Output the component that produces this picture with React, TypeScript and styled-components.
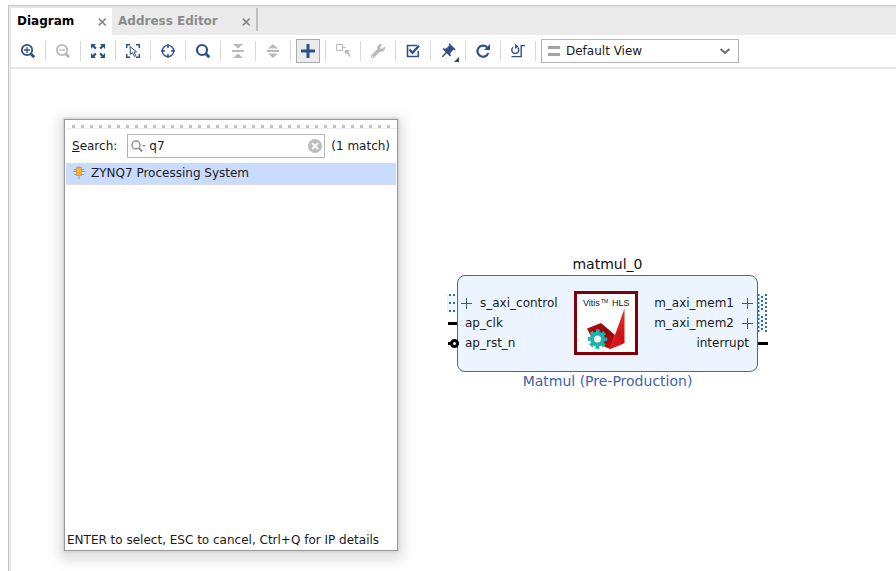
import React from "react";
import styled, { createGlobalStyle } from "styled-components";
import { FaWrench } from "react-icons/fa";
import { MdPushPin } from "react-icons/md";

const NAVY = "#2f4f88";
const MUTED = "#b9b9b9";

const GlobalStyle = createGlobalStyle`
  * { box-sizing: border-box; }
  body {
    margin: 0;
    background: #fff;
    color: #1a1a1a;
    font: 12px/16px "DejaVu Sans", sans-serif;
  }
  button, input, select { font: inherit; color: inherit; }
`;

const Panel = styled.main`
  display: flex;
  flex-direction: column;
  height: calc(100vh - 5px);
  margin: 5px 0 0 8px;
  border-top: 1px solid #c8c8c8;
  border-left: 1px solid #c8c8c8;
  overflow: hidden;
`;

const Inner = styled.div`
  display: flex;
  flex: 1;
  flex-direction: column;
  border-top: 2px solid #e6e6e6;
  border-left: 2px solid #e6e6e6;
`;

const TabStrip = styled.nav`
  display: flex;
  height: 27px;
  flex: none;
  background: #ebebeb;
`;

const Tab = styled.div<{ $active?: boolean }>`
  display: flex;
  align-items: center;
  justify-content: space-between;
  width: ${(p) => (p.$active ? 101 : 144)}px;
  height: 27px;
  padding: 0 5px 2px 6px;
  background: ${(p) => (p.$active ? "#fff" : "#ebebeb")};
  color: ${(p) => (p.$active ? "#000" : "#8b8b8b")};
`;

const TabButton = styled.button`
  padding: 0;
  border: 0;
  background: none;
  font-size: 12px;
  font-weight: bold;
`;

const CloseButton = styled.button`
  display: flex;
  padding: 3px 0 0;
  border: 0;
  background: none;
`;

const StripEnd = styled.div`
  width: 2px;
  height: 23px;
  background: #c0c0c0;
`;

const Toolbar = styled.div`
  display: flex;
  flex: none;
  align-items: center;
  height: 34px;
  border-bottom: 2px solid #e6e6e6;
`;

const ToolCell = styled.div`
  display: flex;
  flex: none;
  align-items: center;
  justify-content: center;
  width: 35px;
  height: 20px;
  border-right: 1px solid #d8d8d8;
`;

const ToolButton = styled.button<{ $pressed?: boolean }>`
  display: flex;
  flex: none;
  align-items: center;
  justify-content: center;
  width: 24px;
  height: 24px;
  padding: 0;
  border: 1px solid ${(p) => (p.$pressed ? "#ababab" : "transparent")};
  background: ${(p) => (p.$pressed ? "#ebebeb" : "none")};
  color: ${NAVY};
  &:disabled { color: ${MUTED}; }
  svg { flex: none; overflow: visible; }
`;

const ViewPicker = styled.label`
  display: flex;
  align-items: center;
  gap: 6px;
  width: 198px;
  height: 24px;
  margin-left: 5px;
  padding: 0 7px 0 6px;
  border: 1px solid #b4b4b4;
  background: #fff;
`;

const ViewSelect = styled.select`
  flex: 1;
  min-width: 0;
  padding: 0;
  border: 0;
  appearance: none;
  background: none;
  outline: none;
`;

const Canvas = styled.section`
  position: relative;
  flex: 1;
`;

const Popup = styled.section`
  position: absolute;
  top: 50px;
  left: 53px;
  display: flex;
  flex-direction: column;
  width: 334px;
  height: 432px;
  padding: 0 1px;
  border: 1px solid #999;
  background: #fff;
  box-shadow: 0 0 2px 1px #d0d0d0, 0 4px 12px 5px rgba(0, 0, 0, 0.13);
`;

const Grip = styled.div`
  height: 9px;
  flex: none;
  border-top: 5px solid #fff;
  border-bottom: 1px solid #ececec;
  background: repeating-linear-gradient(90deg, #fff 0 6px, #c3c3c3 6px 9px);
`;

const SearchRow = styled.div`
  display: flex;
  align-items: center;
  gap: 6px;
  padding: 5px 0 5px 6px;
`;

const SearchLabel = styled.label`
  margin-right: 4px;
`;

const SearchField = styled.div`
  display: flex;
  align-items: center;
  width: 198px;
  height: 24px;
  padding: 0 2px 0 3px;
  border: 1px solid #b4b4b4;
`;

const SearchInput = styled.input`
  flex: 1;
  min-width: 0;
  padding: 0 0 0 3px;
  border: 0;
  outline: none;
  background: none;
`;

const ClearButton = styled.button`
  display: flex;
  padding: 0;
  border: 0;
  background: none;
`;

const Results = styled.ul`
  flex: 1;
  margin: 0;
  padding: 0;
  list-style: none;
`;

const ResultButton = styled.button`
  display: flex;
  align-items: center;
  gap: 6px;
  width: 100%;
  height: 22px;
  padding: 0 0 2px 7px;
  border: 0;
  border-bottom: 1px solid #dcdcdc;
  background: #c9dcff;
  text-align: left;
`;

const Hint = styled.p`
  margin: 0;
  padding: 0 1px 2px;
  white-space: nowrap;
`;

const Node = styled.article`
  position: absolute;
  top: 186px;
  left: 446px;
  width: 301px;
`;

const NodeCaption = styled.h2<{ $kind: "instance" | "type" }>`
  margin: 0;
  color: ${(p) => (p.$kind === "type" ? "#4263a3" : "#111")};
  font-size: 14px;
  font-weight: normal;
  line-height: 18px;
  text-align: center;
`;

const NodeBody = styled.div`
  display: flex;
  height: 97px;
  margin-top: 2px;
  padding: 15px 0;
  border: 1px solid #4565a5;
  border-radius: 8px;
  background: #ecf5ff;
`;

const Ports = styled.ul<{ $side: "left" | "right" }>`
  display: flex;
  flex: ${(p) => (p.$side === "left" ? "0 0 116px" : "1")};
  flex-direction: column;
  margin: 0;
  padding: 2px 0 0;
  list-style: none;
`;

const Port = styled.li<{ $side: "left" | "right" }>`
  position: relative;
  display: flex;
  align-items: center;
  gap: 8px;
  height: 20px;
  padding: ${(p) => (p.$side === "left" ? "0 0 0 7px" : "0 8px 0 0")};
  justify-content: ${(p) => (p.$side === "left" ? "flex-start" : "flex-end")};
`;

const ExpandButton = styled.button<{ $side: "left" | "right" }>`
  display: flex;
  margin: ${(p) => (p.$side === "left" ? "0 0 0 -4px" : "0 -4px 0 0")};
  padding: 0;
  border: 0;
  background: none;
`;

const Pin = styled.svg<{ $side: "left" | "right" }>`
  position: absolute;
  top: 0;
  ${(p) => p.$side}: -11px;
`;

const Logo = styled.svg`
  display: block;
  flex: none;
`;

type IconProps = { children: React.ReactNode };
const Icon = ({ children }: IconProps) => (
  <svg width="16" height="16" viewBox="0 0 16 16" fill="none" stroke="currentColor" aria-hidden="true">
    {children}
  </svg>
);

const Lens = ({ sign }: { sign: string }) => (
  <Icon>
    <circle cx="7" cy="7" r="5.2" strokeWidth="1.8" />
    <path d="M11 11l3.2 3.2" strokeWidth="2.8" />
    <path d={sign} strokeWidth="1.3" />
  </Icon>
);

const Triangles = ({ d }: { d: string }) => (
  <Icon>
    <path d={d} fill="currentColor" stroke="none" />
    <rect x="2" y="7" width="12" height="2" fill="currentColor" stroke="none" />
  </Icon>
);

type Tool = { name: string; icon: React.ReactNode; disabled?: boolean; pressed?: boolean };

const tools: Tool[] = [
  { name: "Zoom in", icon: <Lens sign="M4 7h6M7 4v6" /> },
  { name: "Zoom out", disabled: true, icon: <Lens sign="M4 7h6" /> },
  {
    name: "Zoom fit",
    icon: (
      <Icon>
        <path d="M1 1h5L4.5 2.5 6.6 4.800 5 6.4 2.8 4 1 6zM15 1h-5l1.5 1.5-2.100 2.300L11 6.4 13.2 4 15 6zM1 15h5l-1.5-1.5 2.100-2.300L5 9.6 2.8 12 1 10zM15 15h-5l1.5-1.5-2.100-2.300L11 9.6l2.200 2.400L15 10z" fill="currentColor" stroke="none" />
      </Icon>
    ),
  },
  {
    name: "Select area",
    icon: (
      <Icon>
        <path d="M1.7 5V1.7H5M11 1.7h3.3V5M14.3 11v3.3H11M5 14.3H1.7V11" strokeWidth="1.5" />
        <path d="M5 3.5l.5 8 2-1.700 2 3.700 1.4-.8-2-3.5 2.600-.4z" strokeWidth="1" />
      </Icon>
    ),
  },
  {
    name: "Center",
    icon: (
      <Icon>
        <circle cx="8" cy="8" r="5.7" strokeWidth="1.3" />
        <path d="M8 1v4M8 11v4M1 8h4M11 8h4" strokeWidth="1.5" />
      </Icon>
    ),
  },
  {
    name: "Find",
    icon: (
      <Icon>
        <circle cx="7" cy="7" r="5" strokeWidth="2.2" />
        <path d="M10.8 10.8l3.5 3.5" strokeWidth="3" />
      </Icon>
    ),
  },
  { name: "Collapse all", disabled: true, icon: <Triangles d="M3 1h10L8 5.5zM3 15h10l-5-4.5z" /> },
  { name: "Expand all", disabled: true, icon: <Triangles d="M3 5.5h10L8 1zM3 10.5h10L8 15z" /> },
  {
    name: "Add IP",
    pressed: true,
    icon: (
      <Icon>
        <path d="M1 8h14M8 1v14" strokeWidth="3" />
      </Icon>
    ),
  },
  {
    name: "Make external",
    disabled: true,
    icon: (
      <Icon>
        <path d="M1.5 1.5h6v6h-6zM8 4.500h3" />
        <path d="M10 7h5l-1.700 1.700L15.500 13l-1 1-2.700-4L10 11.500z" fill="currentColor" stroke="none" />
      </Icon>
    ),
  },
  { name: "Customize", disabled: true, icon: <FaWrench size={14} /> },
  {
    name: "Validate design",
    icon: (
      <Icon>
        <path d="M12 2.5H2.5v11h10.8V8" strokeWidth="1.6" />
        <path d="M4.5 6.5l3 3.2 6.5-7" strokeWidth="2.4" />
      </Icon>
    ),
  },
  {
    name: "Pin",
    icon: (
      <Icon>
        <g transform="rotate(45 8 8)">
          <MdPushPin size={18} x={-1} y={0} />
        </g>
        <path d="M19 14v5h-5z" fill="#444" stroke="none" />
      </Icon>
    ),
  },
  {
    name: "Refresh",
    icon: (
      <Icon>
        <path d="M12 4.2A5.6 5.6 0 1 0 13.3 10" strokeWidth="2.2" />
        <path d="M15 1v6H9z" fill="currentColor" stroke="none" />
      </Icon>
    ),
  },
  {
    name: "Regenerate layout",
    icon: (
      <Icon>
        <path d="M3.200 4.200a3.500 3.500 0 1 0 4.500.300M1.500 13.600h9.700v-11H15" strokeWidth="1.400" />
        <path d="M5 1v5L8.500 3.500z" fill="currentColor" stroke="none" />
      </Icon>
    ),
  },
];

const Cross = () => (
  <svg width="9" height="8" viewBox="0 0 9 8" stroke="#858585" strokeWidth="1.5" aria-hidden="true">
    <path d="M.8.6l6.800 6.800M7.600.6L.8 7.4" />
  </svg>
);

type PinKind = "bus" | "line" | "inverted" | "master";
type PortData = { name: string; pin: PinKind; expandable?: boolean };

const inputs: PortData[] = [
  { name: "s_axi_control", pin: "bus", expandable: true },
  { name: "ap_clk", pin: "line" },
  { name: "ap_rst_n", pin: "inverted" },
];
const outputs: PortData[] = [
  { name: "m_axi_mem1", pin: "master", expandable: true },
  { name: "m_axi_mem2", pin: "master", expandable: true },
  { name: "interrupt", pin: "line" },
];

const PinShape = ({ kind, side }: { kind: PinKind; side: "left" | "right" }) => (
  <Pin $side={side} width="12" height="20" viewBox="0 0 12 20" aria-hidden="true">
    {kind === "bus" && (
      <>
        <path d="M0 1h9v18H0z" fill="#ecf5ff" />
        <path d="M2 2h7M2 10h7M2 18h7" stroke="#386da4" strokeWidth="2" strokeDasharray="2 2" />
      </>
    )}
    {kind === "master" && (
      <>
        <path d="M2 1h8v18H2z" fill="#ecf5ff" />
        <path d="M10 1v19" stroke="#386da4" strokeWidth="2" strokeDasharray="2 2" />
        <path d="M6 3v16M2.5 1v19" stroke="#386da4" strokeWidth="2" strokeDasharray="2 2" />
      </>
    )}
    {kind === "line" && <path d={side === "left" ? "M1 10.5h9" : "M2 10.5h10"} stroke="#000" strokeWidth="3" />}
    {kind === "inverted" && (
      <>
        <path d="M1 10.5h4" stroke="#000" strokeWidth="3" />
        <circle cx="7.5" cy="10.5" r="3" fill="#fff" stroke="#000" strokeWidth="3" />
      </>
    )}
  </Pin>
);

const PortList = ({ ports, side }: { ports: PortData[]; side: "left" | "right" }) => (
  <Ports $side={side}>
    {ports.map((port) => {
      const expand = port.expandable && (
        <ExpandButton $side={side} aria-label={`Expand ${port.name}`}>
          <svg width="11" height="11" viewBox="0 0 11 11" stroke="#38588f" aria-hidden="true">
            <path d="M0 5.5h11M5.5 0v11" />
          </svg>
        </ExpandButton>
      );
      return (
        <Port key={port.name} $side={side}>
          <PinShape kind={port.pin} side={side} />
          {side === "left" && expand}
          <span>{port.name}</span>
          {side === "right" && expand}
        </Port>
      );
    })}
  </Ports>
);

const HlsLogo = () => (
  <Logo width="64" height="64" viewBox="0 0 64 64" role="img" aria-label="Vitis HLS">
    <defs>
      <linearGradient id="wing" x1="0" y1="0" x2="1" y2="1">
        <stop offset="0" stopColor="#c80d12" />
        <stop offset="0.5" stopColor="#8d0508" />
        <stop offset="1" stopColor="#d51016" />
      </linearGradient>
      <linearGradient id="blade" x1="0" y1="0" x2="0" y2="1">
        <stop offset="0" stopColor="#f02a2a" />
        <stop offset="1" stopColor="#bd0a0f" />
      </linearGradient>
    </defs>
    <rect x="1.5" y="1.5" width="61" height="61" fill="#fff" stroke="#800007" strokeWidth="3" />
    <path d="M13 37.500L27 32l14 12-5 14-16-7z" fill="url(#wing)" />
    <path d="M50.500 17.500V52L36 58l5-14z" fill="url(#blade)" />
    <path d="M41 44l9.500 8L36 58z" fill="#d9141a" />
    <circle cx="23.5" cy="48" r="5.5" fill="#f5efef" stroke="#19b5ad" strokeWidth="4" />
    <circle cx="23.5" cy="48" r="8.2" fill="none" stroke="#19b5ad" strokeWidth="3" strokeDasharray="3.7 2.74" strokeDashoffset="1.85" />
    <text x="9" y="15" fontFamily="Liberation Sans, sans-serif" fontSize="9" fill="#111">Vitis</text>
    <text x="27" y="12" fontFamily="Liberation Sans, sans-serif" fontSize="5" fill="#111">TM</text>
    <text x="38" y="15" fontFamily="Liberation Sans, sans-serif" fontSize="9" fill="#111">HLS</text>
  </Logo>
);

export default function App() {
  return (
    <>
      <GlobalStyle />
      <Panel>
        <Inner>
          <TabStrip aria-label="Editors">
            <Tab $active>
              <TabButton>Diagram</TabButton>
              <CloseButton aria-label="Close Diagram"><Cross /></CloseButton>
            </Tab>
            <Tab>
              <TabButton>Address Editor</TabButton>
              <CloseButton aria-label="Close Address Editor"><Cross /></CloseButton>
            </Tab>
            <StripEnd />
          </TabStrip>
          <Toolbar role="toolbar">
            {tools.map((tool) => (
              <ToolCell key={tool.name}>
                <ToolButton aria-label={tool.name} disabled={tool.disabled} $pressed={tool.pressed}>
                  {tool.icon}
                </ToolButton>
              </ToolCell>
            ))}
            <ViewPicker>
              <svg width="12" height="10" viewBox="0 0 12 10" fill="#a3a3a3" aria-hidden="true">
                <path d="M0 0h12v3H0zM0 7h12v3H0z" />
              </svg>
              <ViewSelect aria-label="View">
                <option>Default View</option>
              </ViewSelect>
              <svg width="12" height="8" viewBox="0 0 12 8" fill="none" stroke="#6c6c6c" strokeWidth="2" aria-hidden="true">
                <path d="M1.5 2L6 6l4.500-4" />
              </svg>
            </ViewPicker>
          </Toolbar>
          <Canvas>
            <Popup role="dialog" aria-label="Add IP">
              <Grip />
              <SearchRow>
                <SearchLabel htmlFor="ip-search"><u>S</u>earch:</SearchLabel>
                <SearchField>
                  <svg width="15" height="14" viewBox="0 0 15 14" fill="none" stroke="#929292" aria-hidden="true">
                    <circle cx="5" cy="6" r="4" strokeWidth="1.5" />
                    <path d="M8 9l3 3.500" strokeWidth="2" />
                    <path d="M11 6h4l-2 2z" fill="#929292" stroke="none" />
                  </svg>
                  <SearchInput id="ip-search" defaultValue="q7" />
                  <ClearButton aria-label="Clear search">
                    <svg width="14" height="14" viewBox="0 0 14 14" aria-hidden="true">
                      <circle cx="7" cy="7" r="7" fill="#bdbdbd" />
                      <path d="M4 4l6 6M10 4l-6 6" stroke="#fff" strokeWidth="1.800" />
                    </svg>
                  </ClearButton>
                </SearchField>
                <span>(1 match)</span>
              </SearchRow>
              <Results>
                <li>
                  <ResultButton>
                    <svg width="12" height="13" viewBox="0 0 12 13" aria-hidden="true">
                      <path d="M1 3.500h10M0 5.500h12M1 8.500h10M6 0v13" stroke="#9a9a9a" />
                      <rect x="3.500" y="1.500" width="5" height="8" fill="#fdb02a" stroke="#cfa35a" />
                    </svg>
                    ZYNQ7 Processing System
                  </ResultButton>
                </li>
              </Results>
              <Hint>ENTER to select, ESC to cancel, Ctrl+Q for IP details</Hint>
            </Popup>
            <Node>
              <NodeCaption $kind="instance">matmul_0</NodeCaption>
              <NodeBody>
                <PortList ports={inputs} side="left" />
                <HlsLogo />
                <PortList ports={outputs} side="right" />
              </NodeBody>
              <NodeCaption $kind="type">Matmul (Pre-Production)</NodeCaption>
            </Node>
          </Canvas>
        </Inner>
      </Panel>
    </>
  );
}
